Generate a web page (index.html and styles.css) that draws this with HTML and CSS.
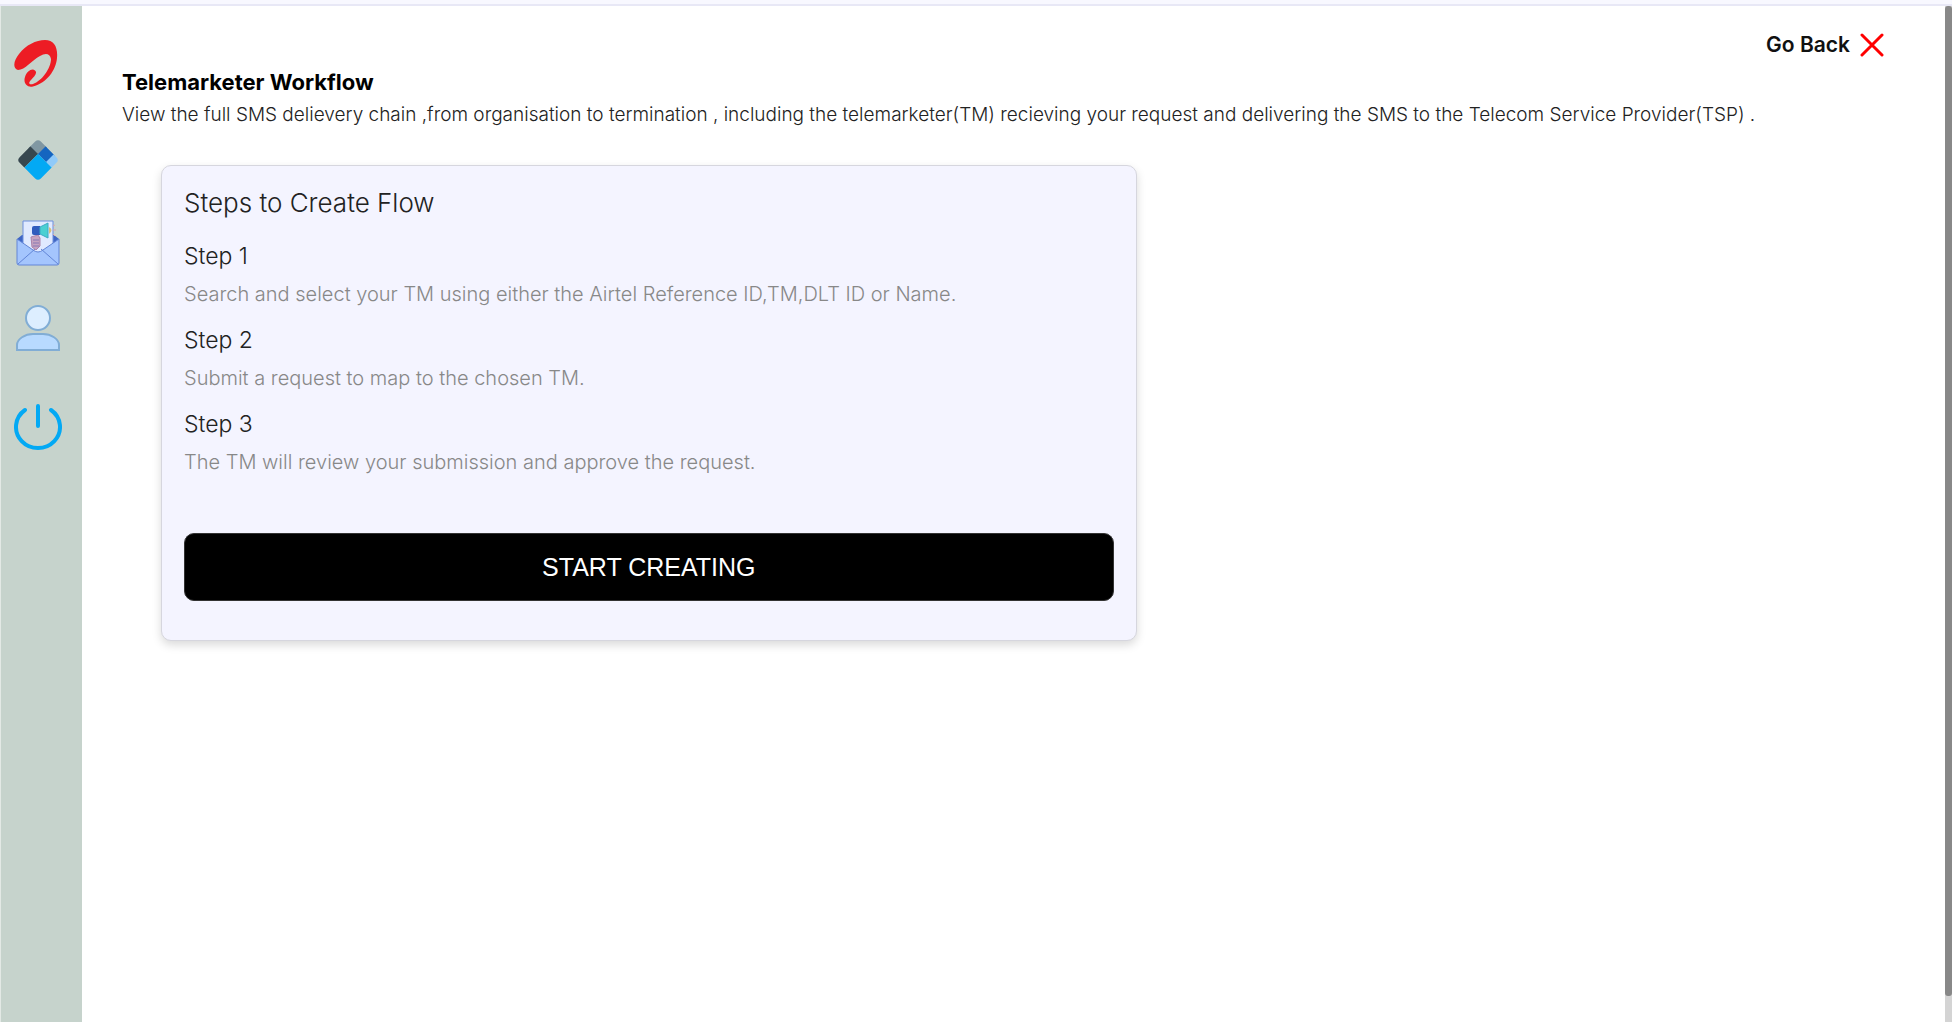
FILE: index.html
```
<!DOCTYPE html>
<html lang="en">
<head>
    <meta charset="UTF-8">
    <meta name="viewport" content="width=device-width, initial-scale=1.0">
    <title>Telemarketer Workflow</title>
    <link rel="stylesheet" href="styles.css">
</head>
<body>
    <div class="top-strip"></div>
    <div class="layout">
        <!-- Sidebar -->
        <nav class="sidebar">
            <a href="#" class="logo" aria-label="Airtel">
                <svg width="44" height="48" viewBox="0 0 44 48">
                    <path fill="#ed1c24" d="M4 30C-2 28 0 20 5 14C12 5 22 0 31 0C40 0 44 7 43 18C42 30 33 43 19 46.500C13 48 9 43 11 37C13 31 18 28 21 30.500C24 33 20 37 17 40C14 43 15 45 19 44C28 41 37 28 37 19C36 13 31 13 26 16C18 20 11 30 4 30Z"/>
                </svg>
            </a>
            <a href="#" class="dashboard" aria-label="Dashboard">
                <svg width="42" height="42" viewBox="0 0 42 42">
                    <defs>
                        <clipPath id="diamond">
                            <rect x="6" y="6" width="30" height="30" rx="4" transform="rotate(45 21 21)"/>
                        </clipPath>
                    </defs>
                    <g clip-path="url(#diamond)">
                        <path fill="#8097a2" d="M21-1L31 8L21 17L10 8Z"/>
                        <path fill="#37474f" d="M12 6L21 15L6 30L-4 21Z"/>
                        <path fill="#1565c0" d="M30 6L39 15L30 24L21 15Z"/>
                        <path fill="#90caf9" d="M38 14L46 22L36 31L29 23Z"/>
                        <path fill="#03a9f4" d="M21 15L36 30L21 45L6 30Z"/>
                    </g>
                </svg>
            </a>
            <a href="#" class="campaign" aria-label="Campaigns">
                <svg width="44" height="46" viewBox="0 0 44 46" stroke-linejoin="round">
                    <path fill="#3f66c4" d="M1 19L6 15H38L43 19V26H1Z"/>
                    <path fill="#e0eaff" stroke="#6c8fdd" d="M7 1H37V26L22 35L7 25Z"/>
                    <path fill="#a4c5fd" stroke="#6285d6" d="M1 19L17 30Q22 34 27 30L43 19V43Q43 45 41 45H3Q1 45 1 43Z"/>
                    <path fill="none" stroke="#6285d6" d="M2 44L19 29M42 44L25 29"/>
                    <path fill="#c5a4c0" stroke="#a983aa" d="M15 17L22 15L24 18V26L20 30L16 27Z"/>
                    <path fill="none" stroke="#8678b5" d="M17 20H23M17 23H23M17 26H23"/>
                    <path fill="#2f5cbd" d="M16 8Q16 6 18 6H24V15H18Q16 15 16 13Z"/>
                    <path fill="#4bd0d2" stroke="#3daac6" d="M24 7L32 3V18L24 14Z"/>
                    <path fill="#d8c078" d="M33 7Q38 10 33 14Z"/>
                    <path fill="none" stroke="#dda5aa" d="M37 6L39 5M37 10H40M37 14L39 16"/>
                </svg>
            </a>
            <a href="#" class="profile" aria-label="Profile">
                <svg width="44" height="46" viewBox="0 0 44 46" stroke="#81add5" stroke-width="2">
                    <circle cx="22" cy="13" r="12" fill="#ddeeff"/>
                    <path fill="#b8daff" d="M1 45V40C1 34 9 29 17 29H27C35 29 43 34 43 40V45Z"/>
                </svg>
            </a>
            <a href="#" class="logout" aria-label="Log out">
                <svg width="48" height="48" viewBox="0 0 48 48" fill="none" stroke="#03a9f4" stroke-width="4" stroke-linecap="round">
                    <path d="M11 8A22 21 0 1 0 37 8M24 4V24"/>
                </svg>
            </a>
        </nav>

        <main class="content">
            <div class="back-row">
                <a href="#" class="go-back">
                    Go Back
                    <svg width="24" height="24" viewBox="0 0 24 24" stroke="#ff0000" stroke-width="3" stroke-linecap="round">
                        <path d="M2 2L22 22M22 2L2 22"/>
                    </svg>
                </a>
            </div>

            <h1>Telemarketer Workflow</h1>
            <p class="subtitle">View the full SMS delievery chain ,from organisation to termination , including the telemarketer(TM) recieving your request and delivering the SMS to the Telecom Service Provider(TSP) .</p>

            <!-- Steps card -->
            <section class="card">
                <h2>Steps to Create Flow</h2>
                <div class="step">
                    <h3>Step 1</h3>
                    <p>Search and select your TM using either the Airtel Reference ID,TM,DLT ID or Name.</p>
                </div>
                <div class="step">
                    <h3>Step 2</h3>
                    <p>Submit a request to map to the chosen TM.</p>
                </div>
                <div class="step">
                    <h3>Step 3</h3>
                    <p>The TM will review your submission and approve the request.</p>
                </div>
                <button type="button" class="start-button">START CREATING</button>
            </section>
        </main>

        <div class="scroll-track">
            <div class="scroll-thumb"></div>
        </div>
    </div>
</body>
</html>
```
FILE: styles.css
```
* {
    box-sizing: border-box;
}

body {
    margin: 0;
    min-height: 100vh;
    display: flex;
    flex-direction: column;
    background: #fff;
    font-family: Inter, "Liberation Sans", sans-serif;
    font-weight: 300;
    color: #222;
}

h1, h2, h3, p {
    margin: 0;
    line-height: 32px;
}

.top-strip {
    height: 6px;
    background: #f8f8ff;
    border-bottom: 2px solid #e8e8f6;
}

.layout {
    flex: 1;
    display: flex;
}

/* Sidebar */
.sidebar {
    width: 82px;
    flex-shrink: 0;
    padding: 34px 8px 0 0;
    display: flex;
    flex-direction: column;
    align-items: center;
    gap: 39px;
    background: #c6d3cc;
    border-left: 1px solid #e3e9e5;
}

.sidebar svg {
    display: block;
}

.logo {
    margin: 0 4px 12px 0;
}

.logout {
    margin-top: 12px;
}

/* Main area */
.content {
    flex: 1;
    padding: 23px 49px 40px 40px;
}

.back-row {
    display: flex;
    justify-content: flex-end;
    margin-bottom: 5px;
    padding-right: 12px;
}

.go-back {
    display: flex;
    align-items: center;
    gap: 10px;
    line-height: 32px;
    font-size: 21px;
    font-weight: 600;
    color: #111;
    text-decoration: none;
}

h1 {
    margin-bottom: 1px;
    font-size: 22px;
    font-weight: 700;
    color: #000;
}

.subtitle {
    font-size: 19px;
}

.card {
    width: 55%;
    margin: 34px 0 0 39px;
    padding: 21px 22px 39px;
    background: #f4f4ff;
    border: 1px solid #d6d6de;
    border-radius: 10px;
    box-shadow: 0 4px 10px rgba(0, 0, 0, 0.15);
}

.card h2 {
    margin-bottom: 21px;
    font-size: 26px;
    font-weight: 300;
}

.step {
    margin-bottom: 14px;
}

.step h3 {
    margin-bottom: 6px;
    font-size: 23px;
    font-weight: 300;
}

.step p {
    font-size: 20px;
    color: #888;
}

.start-button {
    width: 100%;
    height: 68px;
    margin-top: 41px;
    background: #000;
    border: 1px solid #333;
    border-radius: 10px;
    font-family: "Liberation Sans", Arial, sans-serif;
    font-size: 25px;
    color: #fff;
    cursor: pointer;
}

/* Scrollbar */
.scroll-track {
    width: 7px;
    flex-shrink: 0;
    padding-bottom: 26px;
    display: flex;
    background: #d4d4d4;
}

.scroll-thumb {
    flex: 1;
    background: #888;
    border-radius: 3px;
}
```
